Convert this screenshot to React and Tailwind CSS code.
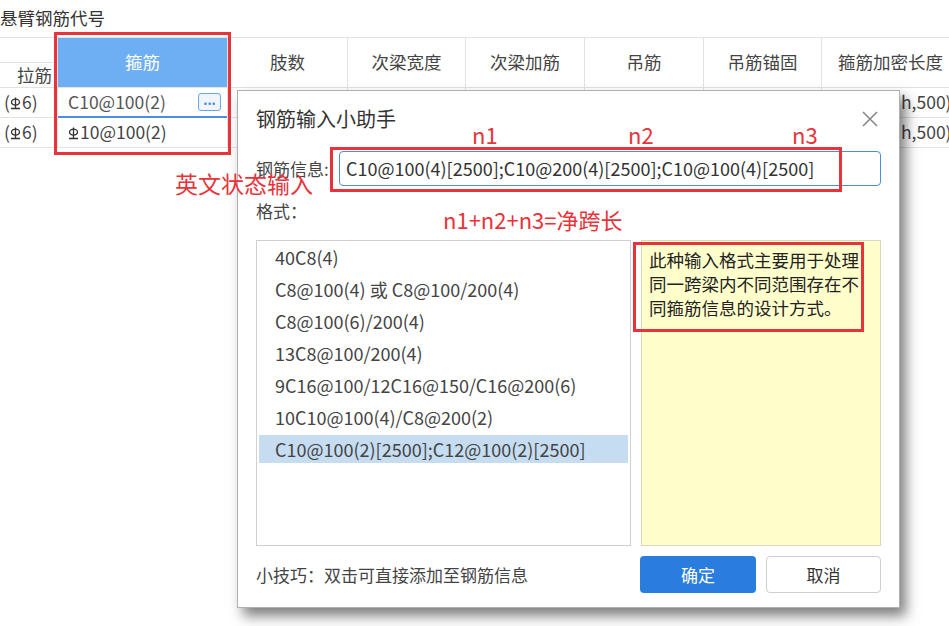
import React from 'react'

const Steel = () => (
  <svg width="11" height="13" viewBox="0 0 11 13" className="inline-block align-top mt-[2px] mr-[1px] shrink-0">
    <ellipse cx="5.5" cy="5.2" rx="4" ry="3" fill="none" stroke="#333" strokeWidth="1.3" />
    <path d="M5.5 0.5V11.5M1 11.5H10" stroke="#333" strokeWidth="1.3" fill="none" />
  </svg>
)

const headers = [
  { label: '肢数', w: 'w-[120px]' },
  { label: '次梁宽度', w: 'w-[118px]' },
  { label: '次梁加筋', w: 'w-[119px]' },
  { label: '吊筋', w: 'w-[119px]' },
  { label: '吊筋锚固', w: 'w-[118px]' },
]

const formats = [
  '40C8(4)',
  'C8@100(4) 或 C8@100/200(4)',
  'C8@100(6)/200(4)',
  '13C8@100/200(4)',
  '9C16@100/12C16@150/C16@200(6)',
  '10C10@100(4)/C8@200(2)',
  'C10@100(2)[2500];C12@100(2)[2500]',
]

const Table = () => (
  <div className="flex border-t border-[#e2e2e2] text-[#444] text-[17.5px]">
    <div className="w-[58px] shrink-0 flex flex-col border-r border-[#e2e2e2]">
      <div className="h-[25px] border-b border-[#e2e2e2]"></div>
      <div className="h-[25px] border-b border-[#e2e2e2] flex items-center justify-end pr-[5px]">拉筋</div>
      <div className="h-[30px] border-b border-[#e2e2e2] flex items-center pl-[4px]">(<Steel />6)</div>
      <div className="h-[30px] border-b border-[#e2e2e2] flex items-center pl-[4px]">(<Steel />6)</div>
    </div>
    <div className="w-[170px] shrink-0 flex flex-col border-r border-[#e2e2e2]">
      <div className="h-[50px] bg-[#6eaff3] text-white flex items-center justify-center border-b border-[#e2e2e2]">箍筋</div>
      <div className="h-[30px] flex items-center justify-between pl-[10px] pr-[6px] border-b-2 border-[#4a90e2]">
        <span className="text-[#555]">C10@100(2)</span>
        <span className="w-[23px] h-[18px] rounded-[3px] border border-[#6aa6e8] bg-[#eef5fd] flex items-center justify-center text-[#4a88d8] text-[13px] leading-none pb-[5px] font-bold">...</span>
      </div>
      <div className="h-[30px] flex items-center pl-[10px] border-b border-[#e2e2e2]"><Steel />10@100(2)</div>
    </div>
    {headers.map(h => (
      <div key={h.label} className={`${h.w} shrink-0 flex flex-col border-r border-[#e2e2e2]`}>
        <div className="h-[50px] flex items-center justify-center border-b border-[#e2e2e2]">{h.label}</div>
        <div className="h-[30px] border-b border-[#e2e2e2]"></div>
        <div className="h-[30px] border-b border-[#e2e2e2]"></div>
      </div>
    ))}
    <div className="w-[200px] shrink-0 flex flex-col">
      <div className="h-[50px] flex items-center pl-[16px] border-b border-[#e2e2e2] whitespace-nowrap">箍筋加密长度</div>
      <div className="h-[30px] border-b border-[#e2e2e2] flex items-center pl-[79px] whitespace-nowrap">h,500)</div>
      <div className="h-[30px] border-b border-[#e2e2e2] flex items-center pl-[79px] whitespace-nowrap">h,500)</div>
    </div>
  </div>
)

const Dialog = () => (
  <div className="absolute left-[237px] top-[90px] w-[663px] h-[518px] bg-white border border-[#b0b0b0] shadow-[6px_8px_12px_rgba(0,0,0,0.5)] px-[18px] text-[#444]">
    <div className="flex items-center justify-between pt-[14px] h-[60px] pb-[18px]">
      <span className="text-[20px] leading-[28px] text-[#333]">钢筋输入小助手</span>
      <svg width="20" height="20" viewBox="0 0 20 20" className="mr-[1px]">
        <path d="M3 3L17 17M17 3L3 17" stroke="#888" strokeWidth="1.6" fill="none" />
      </svg>
    </div>
    <div className="flex items-center h-[35px]">
      <span className="w-[83px] text-[17px] whitespace-nowrap">钢筋信息:</span>
      <div className="flex-1 h-[35px] border border-[#4a8ee0] rounded-[4px] flex items-center pl-[6px] text-[18px] text-[#333] whitespace-nowrap overflow-hidden">
        C10@100(4)[2500];C10@200(4)[2500];C10@100(4)[2500]
      </div>
    </div>
    <div className="h-[54px] flex items-center text-[17px] pb-[4px]">格式：</div>
    <div className="flex gap-[10px] h-[306px]">
      <div className="w-[375px] border border-[#cfcfcf] px-[2px] text-[18px] text-[#444]">
        {formats.map((f, i) => (
          <div
            key={f}
            className={`flex items-center pl-[16px] whitespace-nowrap ${i === 6 ? 'bg-[#c5dcf1] h-[28px] mt-[2px]' : 'h-[32px]'}`}
          >
            {f}
          </div>
        ))}
      </div>
      <div className="flex-1 bg-[#ffffcc] border border-[#d8d8c0] pl-[7px] pr-[4px] pt-[7px] text-[17.5px] leading-[24px] text-[#222]">
        此种输入格式主要用于处理同一跨梁内不同范围存在不同箍筋信息的设计方式。
      </div>
    </div>
    <div className="flex items-center mt-[10px] h-[37px]">
      <span className="flex-1 text-[17px] text-[#444]">小技巧：双击可直接添加至钢筋信息</span>
      <button className="w-[116px] h-[37px] rounded-[4px] bg-[#2a7ddf] text-white text-[17px]">确定</button>
      <button className="w-[115px] h-[37px] ml-[10px] rounded-[4px] border border-[#cfcfcf] bg-white text-[#333] text-[17px]">取消</button>
    </div>
  </div>
)

const Notes = () => (
  <>
    <div className="absolute left-[54px] top-[32px] w-[177px] h-[123px] border-[3px] border-[#e8333b]"></div>
    <div className="absolute left-[330px] top-[147px] w-[512px] h-[45px] border-[3px] border-[#e8333b]"></div>
    <div className="absolute left-[633px] top-[242px] w-[231px] h-[90px] border-[3px] border-[#e8333b]"></div>
    <span className="absolute left-[472px] top-[121px] text-[22px] leading-[26px] text-[#e8333b]">n1</span>
    <span className="absolute left-[628px] top-[121px] text-[22px] leading-[26px] text-[#e8333b]">n2</span>
    <span className="absolute left-[792px] top-[121px] text-[22px] leading-[26px] text-[#e8333b]">n3</span>
    <span className="absolute left-[175px] top-[170px] text-[23px] leading-[26px] text-[#e8333b] whitespace-nowrap">英文状态输入</span>
    <span className="absolute left-[443px] top-[206px] text-[22px] leading-[26px] text-[#e8333b] whitespace-nowrap">n1+n2+n3=净跨长</span>
  </>
)

const App = () => {
  return (
    <div className="relative w-[949px] h-[626px] overflow-hidden bg-white font-['Noto_Sans_CJK_SC',sans-serif]">
      <div className="h-[37px] pt-[5px] text-[17.5px] text-[#333]">悬臂钢筋代号</div>
      <Table />
      <Dialog />
      <Notes />
    </div>
  )
}

export default App
